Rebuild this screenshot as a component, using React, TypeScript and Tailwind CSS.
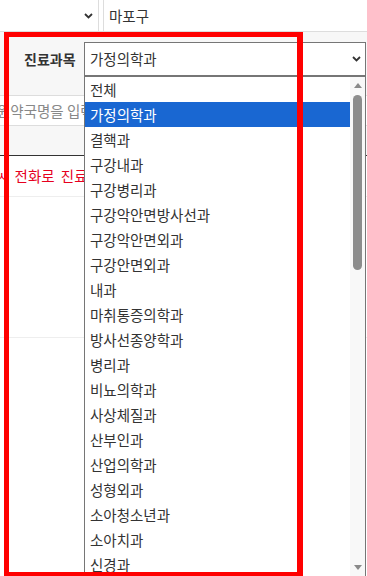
import React from "react";

const items = [
  "전체",
  "가정의학과",
  "결핵과",
  "구강내과",
  "구강병리과",
  "구강악안면방사선과",
  "구강악안면외과",
  "구강안면외과",
  "내과",
  "마취통증의학과",
  "방사선종양학과",
  "병리과",
  "비뇨의학과",
  "사상체질과",
  "산부인과",
  "산업의학과",
  "성형외과",
  "소아청소년과",
  "소아치과",
  "신경과",
  "신경외과",
];

function Chevron({ className }: { className?: string }) {
  return (
    <svg className={className} width="9" height="6" viewBox="0 0 9 6" fill="none">
      <polyline points="1,1 4.5,4.5 8,1" stroke="#333" strokeWidth="1.8" />
    </svg>
  );
}

export default function App() {
  return (
    <div
      className="relative w-[367px] h-[576px] overflow-hidden bg-white text-[14.5px] text-[#333]"
      style={{ fontFamily: '"Noto Sans CJK KR", "Noto Sans", sans-serif' }}
    >
      {/* row 1 */}
      <div className="flex h-[32px] border-b border-[#dddddd]">
        <div className="w-[99px] border-r border-[#dddddd] flex items-center justify-end pr-[5px]">
          <Chevron />
        </div>
        <div className="w-[4px]" />
        <div className="flex-1 border-l border-[#dddddd] flex items-center pl-[5px]">마포구</div>
      </div>
      {/* row 2 */}
      <div className="flex items-start h-[64px] bg-[#f7f7f7] border-b border-[#dddddd] pt-[10px] pl-[24px]">
        <div className="w-[60px] h-[34px] flex items-center font-bold text-[14px]">진료과목</div>
        <div className="w-[282px] h-[34px] border border-[#767676] bg-white flex items-center justify-between pl-[5px] pr-[4px]">
          <span>가정의학과</span>
          <Chevron />
        </div>
      </div>
      {/* row 3 */}
      <div className="h-[30px] border-b border-[#dddddd] flex items-center overflow-hidden">
        <span className="ml-[-3px] whitespace-nowrap text-[#888]">원약국명을 입력하세요</span>
      </div>
      {/* row 4 */}
      <div className="h-[30px] bg-[#f7f7f7] border-b border-[#333]" />
      {/* row 5 */}
      <div className="h-[41px] border-b border-[#eeeeee] flex items-center overflow-hidden">
        <span className="ml-[-5px] whitespace-nowrap text-[#e6001e] [word-spacing:3px]">ㅅ 전화로 진료 상담이 가능합니다</span>
      </div>
      <div className="h-[141px] border-b border-[#eeeeee]" />

      {/* open dropdown list */}
      <div className="absolute left-[84px] top-[76px] w-[282px] h-[501px] border border-[#767676] bg-white flex overflow-hidden">
        <div className="w-[265px] flex flex-col">
          {items.map((it, i) => (
            <div
              key={it}
              className={
                i === 1
                  ? "h-[25px] shrink-0 flex items-center pl-[5px] bg-[#1967d2] text-white"
                  : "h-[25px] shrink-0 flex items-center pl-[5px]"
              }
            >
              {it}
            </div>
          ))}
        </div>
        <div className="w-[15px] bg-[#f8f8f8] flex flex-col items-center">
          <div className="h-[17px] flex items-center justify-center">
            <svg width="8" height="5" viewBox="0 0 8 5">
              <polygon points="0,5 4,0 8,5" fill="#8a8a8a" />
            </svg>
          </div>
          <div className="mt-[1px] w-[9px] h-[175px] rounded-full bg-[#8c8c8c]" />
          <div className="flex-1" />
          <div className="h-[17px] flex items-center justify-center">
            <svg width="8" height="5" viewBox="0 0 8 5">
              <polygon points="0,0 8,0 4,5" fill="#8a8a8a" />
            </svg>
          </div>
        </div>
      </div>

      {/* red highlight box */}
      <div className="absolute left-[4px] top-[32px] w-[299px] h-[545px] border-[5px] border-r-[6px] border-[#ff0000] pointer-events-none" />
    </div>
  );
}
